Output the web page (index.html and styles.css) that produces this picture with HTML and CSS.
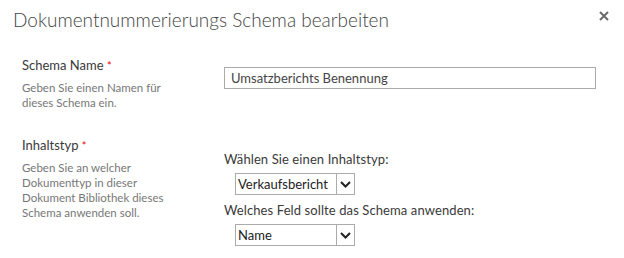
FILE: index.html
```html
<!DOCTYPE html>
<html lang="de">
<head>
    <meta charset="UTF-8">
    <title>Dokumentnummerierungs Schema bearbeiten</title>
    <link rel="stylesheet" href="styles.css">
</head>
<body>
    <div class="dialog">
        <div class="dialog-head">
            <h1>Dokumentnummerierungs Schema bearbeiten</h1>
            <span class="close">
                <svg width="10" height="10" viewBox="0 0 10 10"><path d="M1 1L9 9M9 1L1 9" stroke="#6a6a6a" stroke-width="2"/></svg>
            </span>
        </div>

        <div class="form-row first">
            <div class="label-col">
                <div class="label">Schema Name <span class="req">*</span></div>
                <div class="desc">Geben Sie einen Namen für dieses Schema ein.</div>
            </div>
            <div class="field-col">
                <input type="text" class="text-input" value="Umsatzberichts Benennung">
            </div>
        </div>

        <div class="form-row second">
            <div class="label-col">
                <div class="label">Inhaltstyp <span class="req">*</span></div>
                <div class="desc">Geben Sie an welcher Dokumenttyp in dieser Dokument Bibliothek dieses Schema anwenden soll.</div>
            </div>
            <div class="field-col">
                <div class="field-label">Wählen Sie einen Inhaltstyp:</div>
                <div class="select">
                    <span class="select-value">Verkaufsbericht</span>
                    <span class="select-arrow"><svg width="11" height="7" viewBox="0 0 11 7"><path d="M1 1L5.5 5.5L10 1" fill="none" stroke="#222" stroke-width="2"/></svg></span>
                </div>
                <div class="field-label">Welches Feld sollte das Schema anwenden:</div>
                <div class="select">
                    <span class="select-value">Name</span>
                    <span class="select-arrow"><svg width="11" height="7" viewBox="0 0 11 7"><path d="M1 1L5.5 5.5L10 1" fill="none" stroke="#222" stroke-width="2"/></svg></span>
                </div>
            </div>
        </div>
    </div>
</body>
</html>
```

FILE: styles.css
```css
* {
    margin: 0;
    padding: 0;
    box-sizing: border-box;
}

body {
    font-family: Lato, 'Open Sans', sans-serif;
    background: #fff;
    color: #444;
}

.dialog {
    width: 624px;
    height: 258px;
    padding: 6px 0 0 13px;
}

.dialog-head {
    display: flex;
    justify-content: space-between;
    align-items: flex-start;
    height: 50px;
}

h1 {
    font-size: 19px;
    font-weight: 300;
    color: #444;
    line-height: 28px;
}

.close {
    display: block;
    margin: 5px 15px 0 0;
}

.close svg {
    display: block;
}

.form-row {
    display: flex;
    padding-left: 9px;
}

.form-row.second {
    margin-top: 26px;
}

.label-col {
    width: 202px;
}

.label {
    font-size: 13px;
    color: #3a3a3a;
    line-height: 18px;
}

.req {
    color: #e00;
    font-size: 11px;
}

.desc {
    width: 150px;
    margin-top: 5px;
    font-size: 11.5px;
    color: #777;
    line-height: 15px;
}

.field-col {
    flex: 1;
}

.form-row.first .field-col {
    padding-top: 11px;
}

.text-input {
    width: 372px;
    height: 22px;
    border: 1px solid #ababab;
    padding: 0 6px;
    font-family: inherit;
    font-size: 13px;
    color: #444;
    outline: none;
}

.second .field-col {
    padding-top: 14px;
}

.field-label {
    font-size: 13px;
    color: #3a3a3a;
    line-height: 18px;
    letter-spacing: 0.1px;
}

.select {
    display: flex;
    width: 120px;
    height: 22px;
    margin: 5px 0 6px 11px;
    border: 1px solid #ababab;
}

.select-value {
    flex: 1;
    padding-left: 2px;
    font-size: 13px;
    line-height: 20px;
    color: #222;
}

.select-arrow {
    width: 18px;
    border-left: 1px solid #ababab;
    display: flex;
    align-items: center;
    justify-content: center;
}
```
